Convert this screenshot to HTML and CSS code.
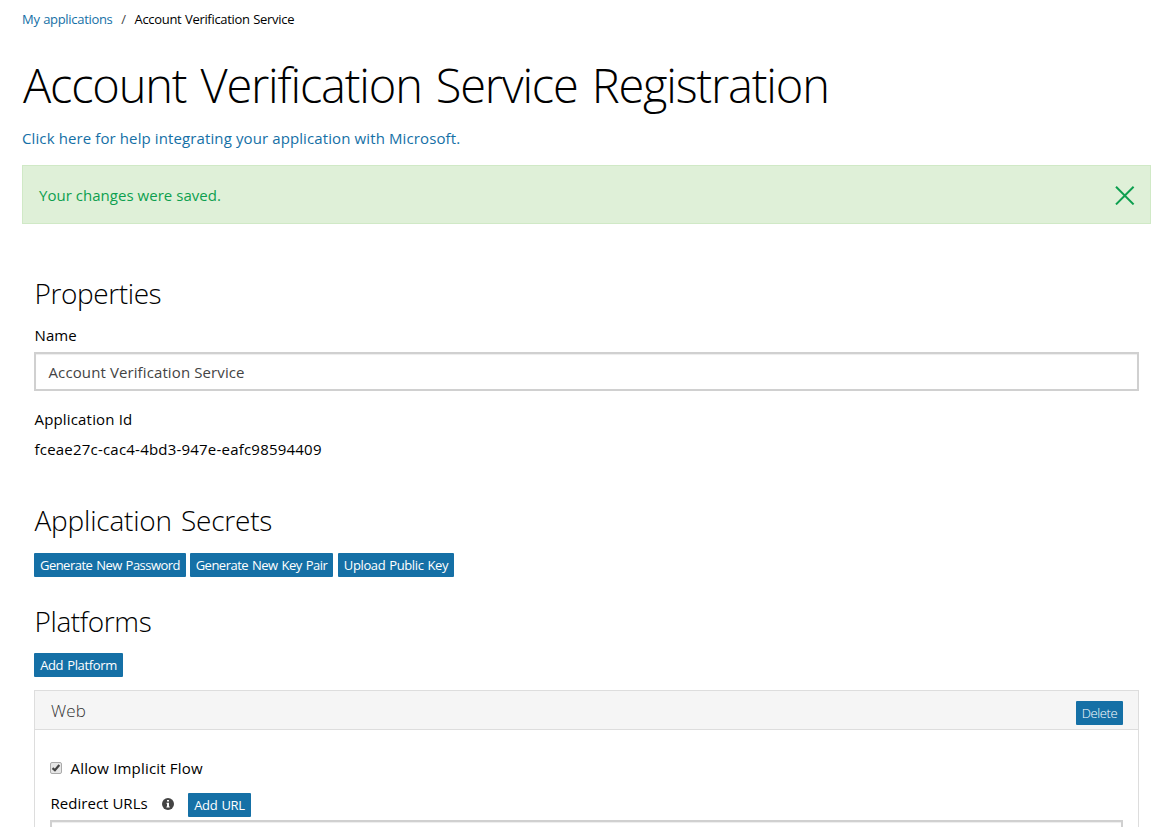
FILE: index.html
```html
<!DOCTYPE html>
<html lang="en">
<head>
<meta charset="utf-8">
<title>Account Verification Service Registration</title>
<link rel="stylesheet" href="styles.css">
</head>
<body>
<nav class="breadcrumb"><a class="link" href="#">My applications</a><span class="separator">/</span><span class="crumb-current">Account Verification Service</span></nav>
<h1 class="page-title">Account Verification Service Registration</h1>
<p class="help"><a class="link" href="#">Click here for help integrating your application with Microsoft.</a></p>
<div class="alert"><span class="alert-text">Your changes were saved.</span>
<svg class="close" viewBox="0 0 20 20" width="20" height="20"><path d="M1 1.8L18.6 19.4M18.6 1.8L1 19.4"/></svg></div>
<main class="content">
<h2 class="section-title properties">Properties</h2>
<div class="label name-label">Name</div>
<div class="input">Account Verification Service</div>
<div class="label id-label">Application Id</div>
<div class="app-id">fceae27c-cac4-4bd3-947e-eafc98594409</div>
<h2 class="section-title secrets">Application Secrets</h2>
<div class="buttons"><button class="btn password">Generate New Password</button><button class="btn key-pair">Generate New Key Pair</button><button class="btn upload">Upload Public Key</button></div>
<h2 class="section-title platforms">Platforms</h2>
<div class="buttons"><button class="btn platform">Add Platform</button></div>
<section class="panel">
<header class="panel-header"><h3 class="panel-title">Web</h3><button class="btn delete">Delete</button></header>
<div class="panel-body">
<label class="check-row"><svg class="checkbox" viewBox="0 0 12 12" width="12" height="12"><rect class="box" x=".5" y=".5" width="11" height="11" rx="1.5"/><path class="tick" d="M2.5 6.2L4.9 8.2L9.3 3"/></svg><span class="check-label">Allow Implicit Flow</span></label>
<div class="redirect-row"><span class="redirect-label">Redirect URLs</span><svg class="info" viewBox="0 0 12 12" width="12" height="12"><circle cx="6" cy="6" r="6"/><path d="M5 2h2v1.6H5zM4.5 4.8H7v3.8h.7v.9H4.4v-.9H5V5.7h-.5z"/></svg><button class="btn url">Add URL</button></div>
<div class="input url-input"></div>
</div>
</section>
</main>
</body>
</html>
```

FILE: styles.css
```css
* { box-sizing: border-box; }
body { margin: 0; height: 827px; overflow: hidden; background: #fff; color: #000; font: 15px/20px "Open Sans", sans-serif; letter-spacing: .11px; }
h1, h2, h3, p { margin: 0; font-weight: 300; }
.link { color: #1570a6; text-decoration: none; }
.breadcrumb { display: flex; padding: 9px 22px 0; height: 29px; font-size: 13px; letter-spacing: -.31px; word-spacing: .5px; }
.separator { width: 22px; text-align: center; color: #444; }
.page-title { padding: 26px 22px 0 23px; height: 99px; font-size: 47px; line-height: 60px; letter-spacing: -1.18px; word-spacing: 3px; white-space: nowrap; }
.help { padding-left: 22px; height: 37px; font-weight: 400; }
.alert { display: flex; justify-content: space-between; align-items: center; width: 1129px; height: 59px; margin-left: 22px; padding: 0 15px 0 16px; border: 1px solid #d0e9c6; background: #dff0d8; color: #0d9f4f; }
.alert-text { letter-spacing: .03px; }
.close { fill: none; stroke: #0d9f4f; stroke-width: 2; }
.content { padding: 49px 36px 0 34px; }
.section-title { padding-left: .5px; font-size: 28px; line-height: 40px; letter-spacing: -.4px; }
.properties { height: 52px; }
.label { padding-left: .5px; }
.name-label { height: 27px; }
.input { height: 39px; padding: 8px 12.5px; border: 2px solid #d0d0d0; box-shadow: inset 0 1px 1px rgba(0,0,0,.075); color: #444; }
.id-label { margin-top: 18px; height: 30px; letter-spacing: .17px; }
.app-id { padding-left: .5px; height: 61px; letter-spacing: .21px; }
.secrets { height: 53px; letter-spacing: -.2px; word-spacing: 2px; }
.buttons { display: flex; gap: 4px; }
.btn { height: 24px; padding: 0; border: 0; border-radius: 1px; background: #1570a6; color: #fff; font: 13px/25px "Open Sans", sans-serif; letter-spacing: -.36px; word-spacing: 1px; white-space: nowrap; }
.password { width: 152px; letter-spacing: -.52px; }
.key-pair { width: 143px; letter-spacing: -.5px; }
.upload { width: 116px; margin-left: 1px; letter-spacing: -.38px; }
.platforms { margin-top: 24px; height: 52px; }
.platform { width: 89px; }
.panel { height: 160px; margin-top: 13px; border: 1px solid #ddd; }
.panel-header { display: flex; justify-content: space-between; height: 39px; padding: 10px 15px 0 16px; border-bottom: 1px solid #ddd; background: #f5f5f5; color: #333; }
.panel-title { font-size: 17px; line-height: 20px; }
.delete { width: 47px; font-weight: 300; }
.panel-body { padding: 28px 15px 0; }
.check-row { display: flex; align-items: center; height: 20px; letter-spacing: .18px; }
.checkbox { margin-right: 8.5px; }
.box { fill: #e6e6e6; stroke: #aaa; }
.tick { fill: none; stroke: #444; stroke-width: 2.2; }
.redirect-row { display: flex; height: 24px; margin-top: 15px; }
.redirect-label { width: 112px; padding-left: .5px; letter-spacing: .03px; }
.info { margin: 5px 14px 0 0; }
.info circle { fill: #444; }
.info path { fill: #fff; }
.url { width: 63px; letter-spacing: -.3px; }
.url-input { margin-top: 3px; }
```
